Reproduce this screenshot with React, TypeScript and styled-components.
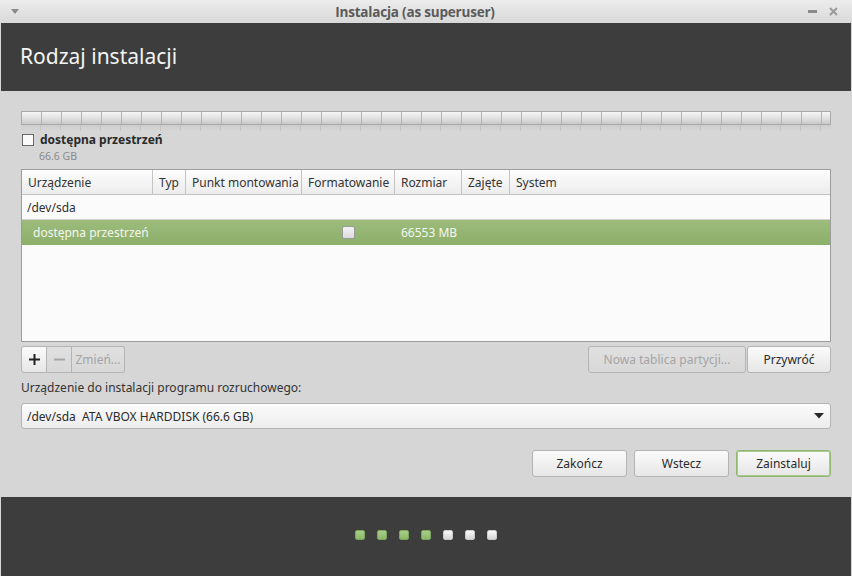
import React from "react";
import styled, { createGlobalStyle } from "styled-components";

const Global = createGlobalStyle`
  html, body { margin: 0; padding: 0; background: #d6d6d6; }
  body { font-family: "Noto Sans", "Open Sans", sans-serif; font-size: 12px; color: #2f2f2f; }
  * { box-sizing: border-box; }
`;

const Window = styled.div`
  width: 852px;
  height: 576px;
  display: flex;
  flex-direction: column;
  background: #d6d6d6;
  overflow: hidden;
`;

const TitleBar = styled.div`
  height: 23px;
  flex: none;
  display: flex;
  align-items: center;
  padding: 0 14px 0 10px;
  background: linear-gradient(#ececec, #d9d9d9);
  color: #5a5a5a;
`;

const TitleText = styled.div`
  flex: 1;
  text-align: center;
  font-family: "Open Sans", "Noto Sans", sans-serif;
  font-weight: 700;
  font-size: 13.5px;
  letter-spacing: -0.2px;
  padding-left: 2px;
`;

const Controls = styled.div`
  display: flex;
  align-items: center;
  gap: 12px;
`;

const Header = styled.div`
  height: 68px;
  flex: none;
  background: #3d3d3d;
  margin: 0 1px;
  display: flex;
  align-items: center;
  padding-left: 19px;
  padding-bottom: 2px;
`;

const HeaderTitle = styled.div`
  font-size: 21px;
  color: #f4f4f4;
  font-weight: 400;
`;

const Content = styled.div`
  flex: 1;
  display: flex;
  flex-direction: column;
  padding: 20px 21px 0 21px;
`;

const Bar = styled.div`
  height: 14px;
  width: 810px;
  border: 1px solid #a8a8a8;
  background:
    repeating-linear-gradient(90deg, transparent 0 19px, #b4b4b4 19px 20px),
    linear-gradient(#f6f6f6, #e2e2e2 50%, #c9c9c9);
`;

const Reflection = styled.div`
  height: 6px;
  width: 810px;
  background:
    repeating-linear-gradient(90deg, transparent 0 19px, rgba(170,170,170,0.35) 19px 20px),
    linear-gradient(rgba(200,200,200,0.6), rgba(214,214,214,0));
`;

const Legend = styled.div`
  display: flex;
  gap: 6px;
  margin-top: 1px;
  padding-left: 1px;
`;

const Check = styled.div`
  width: 12px;
  height: 12px;
  border: 1px solid #6a6a6a;
  background: #fafafa;
  flex: none;
  margin-top: 2px;
`;

const LegendText = styled.div`
  display: flex;
  flex-direction: column;
`;

const LegendName = styled.div`
  font-weight: 700;
  font-size: 12px;
  color: #2a2a2a;
  line-height: 16px;
`;

const LegendSize = styled.div`
  font-size: 10.5px;
  color: #8a8a8a;
  line-height: 16px;
  margin-left: -1px;
`;

const Table = styled.div`
  margin-top: 5px;
  height: 173px;
  width: 810px;
  border: 1px solid #9c9c9c;
  background: #fbfbfb;
  display: flex;
  flex-direction: column;
`;

const cols = "131px 33px 116px 93px 67px 48px 1fr";

const HeadRow = styled.div`
  display: grid;
  grid-template-columns: ${cols};
  height: 25px;
  background: linear-gradient(#fdfdfd, #ececec);
  border-bottom: 1px solid #c4c4c4;
`;

const HeadCell = styled.div<{ $last?: boolean }>`
  display: flex;
  align-items: center;
  padding-left: 6px;
  font-size: 12px;
  color: #333;
  border-right: ${p => (p.$last ? "none" : "1px solid #c4c4c4")};
  white-space: nowrap;
`;

const Row = styled.div<{ $selected?: boolean }>`
  display: grid;
  grid-template-columns: ${cols};
  height: 25px;
  align-items: center;
  font-size: 12px;
  color: ${p => (p.$selected ? "#f4f6ef" : "#2f2f2f")};
  background: ${p => (p.$selected ? "linear-gradient(#9dbc7d, #8caf69)" : "transparent")};
  border-bottom: ${p => (p.$selected ? "none" : "1px solid #d2d2d2")};
`;

const Cell = styled.div<{ $indent?: number; $center?: boolean }>`
  padding-left: ${p => p.$indent ?? 4}px;
  display: flex;
  justify-content: ${p => (p.$center ? "center" : "flex-start")};
  white-space: nowrap;
`;

const RowCheck = styled.div`
  width: 13px;
  height: 13px;
  border-radius: 2px;
  border: 1px solid #9a9a9a;
  background: linear-gradient(#f2f2f2, #dcdcdc);
`;

const ToolRow = styled.div`
  display: flex;
  justify-content: space-between;
  margin-top: 4px;
  height: 27px;
`;

const Group = styled.div`
  display: flex;
`;

const Btn = styled.button<{ $w?: number; $disabled?: boolean; $first?: boolean; $joined?: boolean; $accent?: boolean }>`
  font-family: "Noto Sans", "Open Sans", sans-serif;
  font-size: 12px;
  width: ${p => (p.$w ? `${p.$w}px` : "auto")};
  height: 27px;
  padding: 0 6px;
  color: ${p => (p.$disabled ? "#a4a4a4" : "#2b2b2b")};
  background: ${p => (p.$disabled ? "linear-gradient(#e0e0e0, #d8d8d8)" : "linear-gradient(#fbfbfb, #e6e6e6)")};
  border: 1px solid ${p => (p.$accent ? "#93b874" : "#b4b4b4")};
  box-shadow: ${p => (p.$accent ? "inset 0 0 0 1px #a9c88d" : "none")};
  border-radius: ${p => (p.$joined ? (p.$first ? "3px 0 0 3px" : "0 3px 3px 0") : "3px")};
  ${p => (p.$joined && !p.$first ? "border-left: none;" : "")}
  display: flex;
  align-items: center;
  justify-content: center;
`;

const MidBtn = styled(Btn)`
  border-radius: 0;
  border-left: none;
`;

const Label = styled.div`
  margin-top: 6px;
  font-size: 12px;
  color: #333;
  line-height: 18px;
`;

const Combo = styled.div`
  margin-top: 6px;
  height: 26px;
  width: 810px;
  border: 1px solid #b4b4b4;
  border-radius: 3px;
  background: linear-gradient(#fcfcfc, #ececec);
  display: flex;
  align-items: center;
  justify-content: space-between;
  padding: 0 6px 0 5px;
  font-size: 12px;
  color: #2b2b2b;
`;

const Actions = styled.div`
  margin-top: 21px;
  display: flex;
  justify-content: flex-end;
  gap: 7px;
`;

const Footer = styled.div`
  height: 79px;
  flex: none;
  background: #3d3d3d;
  margin: 0 1px;
  display: flex;
  justify-content: center;
  align-items: center;
  gap: 12px;
  padding-bottom: 4px;
`;

const Dot = styled.div<{ $done?: boolean }>`
  width: 10px;
  height: 10px;
  border-radius: 2px;
  background: ${p => (p.$done ? "linear-gradient(#a7ce88, #8cb86a)" : "linear-gradient(#fafafa, #d4d4d4)")};
  border: 1px solid ${p => (p.$done ? "#7ea55e" : "#c8c8c8")};
`;

export default function App() {
  return (
    <Window>
      <Global />
      <TitleBar>
        <svg width="10" height="8" viewBox="0 0 10 8">
          <path d="M1 1 L9 1 L5 6 Z" fill="#8a8a8a" />
        </svg>
        <TitleText>Instalacja (as superuser)</TitleText>
        <Controls>
          <svg width="9" height="4" viewBox="0 0 9 4">
            <rect x="0" y="0" width="9" height="3" fill="#8a8a8a" />
          </svg>
          <svg width="9" height="9" viewBox="0 0 9 9">
            <path d="M1 1 L8 8 M8 1 L1 8" stroke="#9a9a9a" strokeWidth="2" />
          </svg>
        </Controls>
      </TitleBar>
      <Header>
        <HeaderTitle>Rodzaj instalacji</HeaderTitle>
      </Header>
      <Content>
        <Bar />
        <Reflection />
        <Legend>
          <Check />
          <LegendText>
            <LegendName>dostępna przestrzeń</LegendName>
            <LegendSize>66.6 GB</LegendSize>
          </LegendText>
        </Legend>
        <Table>
          <HeadRow>
            <HeadCell>Urządzenie</HeadCell>
            <HeadCell>Typ</HeadCell>
            <HeadCell>Punkt montowania</HeadCell>
            <HeadCell>Formatowanie</HeadCell>
            <HeadCell>Rozmiar</HeadCell>
            <HeadCell>Zajęte</HeadCell>
            <HeadCell $last>System</HeadCell>
          </HeadRow>
          <Row>
            <Cell $indent={5}>/dev/sda</Cell>
          </Row>
          <Row $selected>
            <Cell $indent={11}>dostępna przestrzeń</Cell>
            <Cell />
            <Cell />
            <Cell $center $indent={0}>
              <RowCheck />
            </Cell>
            <Cell $indent={6}>66553 MB</Cell>
            <Cell />
            <Cell />
          </Row>
        </Table>
        <ToolRow>
          <Group>
            <Btn $w={26} $joined $first>
              <svg width="11" height="11" viewBox="0 0 11 11">
                <path d="M5.5 0 V11 M0 5.5 H11" stroke="#222" strokeWidth="2" />
              </svg>
            </Btn>
            <MidBtn $w={25} $disabled>
              <svg width="11" height="11" viewBox="0 0 11 11">
                <path d="M0 5.5 H11" stroke="#a6a6a6" strokeWidth="2" />
              </svg>
            </MidBtn>
            <Btn $w={53} $joined $disabled>
              Zmień...
            </Btn>
          </Group>
          <Group>
            <Btn $w={158} $disabled>
              Nowa tablica partycji...
            </Btn>
            <Btn $w={84} style={{ marginLeft: 1 }}>
              Przywróć
            </Btn>
          </Group>
        </ToolRow>
        <Label>Urządzenie do instalacji programu rozruchowego:</Label>
        <Combo>
          <span>/dev/sda&nbsp; ATA VBOX HARDDISK (66.6 GB)</span>
          <svg width="10" height="6" viewBox="0 0 10 6">
            <path d="M0 0 H10 L5 5.5 Z" fill="#2a2a2a" />
          </svg>
        </Combo>
        <Actions>
          <Btn $w={95}>Zakończ</Btn>
          <Btn $w={95}>Wstecz</Btn>
          <Btn $w={95} $accent>
            Zainstaluj
          </Btn>
        </Actions>
      </Content>
      <Footer>
        <Dot $done />
        <Dot $done />
        <Dot $done />
        <Dot $done />
        <Dot />
        <Dot />
        <Dot />
      </Footer>
    </Window>
  );
}
